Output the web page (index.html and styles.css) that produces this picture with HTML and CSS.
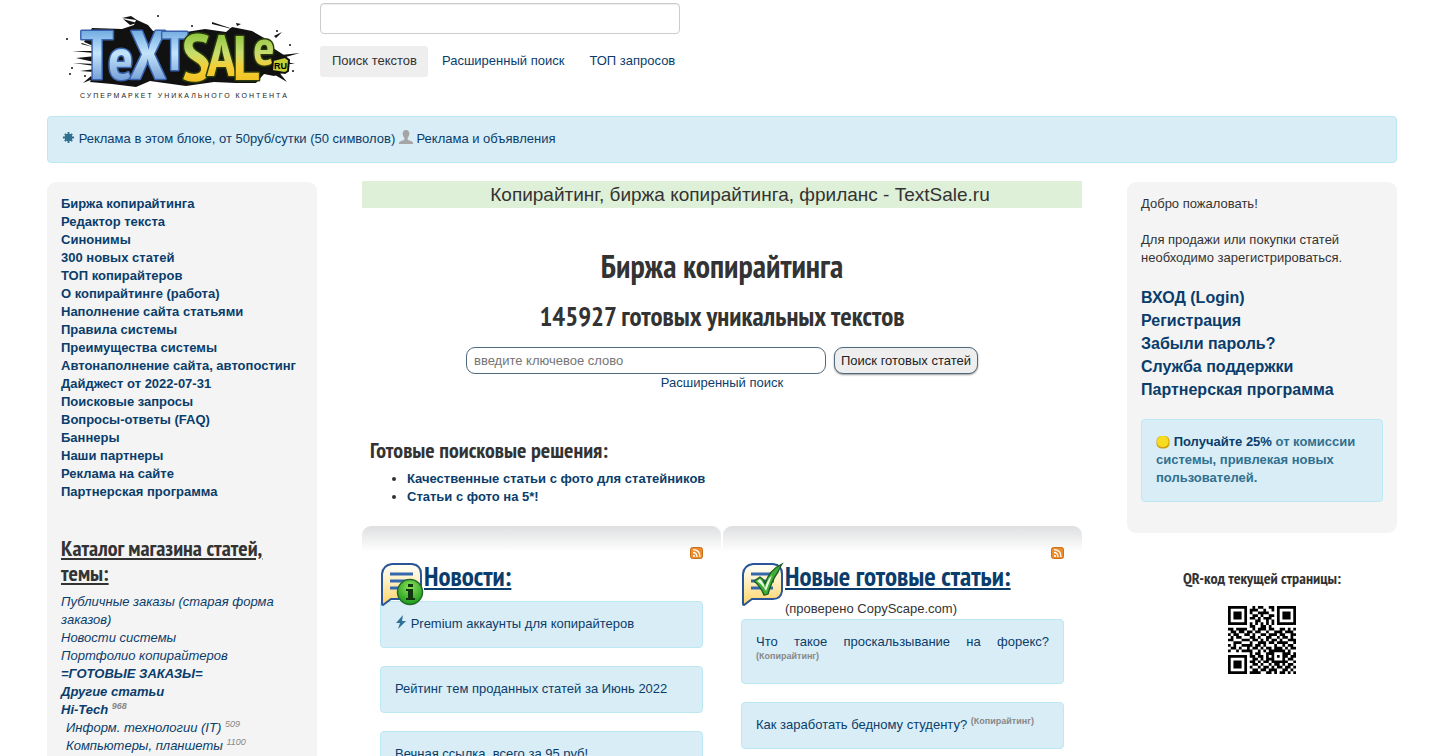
FILE: index.html
```html
<!DOCTYPE html>
<html lang="ru">
<head>
  <meta charset="UTF-8">
  <meta name="viewport" content="width=device-width, initial-scale=1.0">
  <title>Копирайтинг, биржа копирайтинга, фриланс - TextSale.ru</title>
  <link rel="stylesheet" href="styles.css">
</head>
<body>

<div class="container">
  <header class="header">
    <a href="#" class="logo" aria-label="TextSale.ru">
      <svg width="245" height="96" viewBox="60 8 245 96">
        <defs>
          <linearGradient id="blue" gradientUnits="userSpaceOnUse" x1="0" y1="28" x2="0" y2="84">
            <stop offset="0" stop-color="#69a5e0"/>
            <stop offset="0.45" stop-color="#c3e4fa"/>
            <stop offset="1" stop-color="#6b97d2"/>
          </linearGradient>
          <linearGradient id="green" gradientUnits="userSpaceOnUse" x1="0" y1="28" x2="0" y2="84">
            <stop offset="0" stop-color="#7fc031"/>
            <stop offset="0.45" stop-color="#c8dd6e"/>
            <stop offset="0.7" stop-color="#f5cf35"/>
            <stop offset="1" stop-color="#f0c020"/>
          </linearGradient>
        </defs>
        <!-- ink splash -->
        <g fill="#111">
          <path d="M92 28L122 29L134 25L136 20L122 18L131 16L137 20L148 25L153 31L186 32L205 29L226 32L232 27L252 31L266 39L273 48L287 57L288 71L274 76L264 74L256 83L236 83L214 82L186 86L150 81L136 87L112 84L90 82L94 72L80 71L95 69L94 62L76 58L96 56L98 48L84 42Z"/>
          <path d="M72 51h22v2zM73 63l22 1v2zM82 43l11 4-12-3zM281 55l19-2-18 5zM283 61l12 3-12 0zM212 22l24 8-24-6zM236 23l5 1-4 2zM274 36l8-4-6 6zM278 71l9 11-12-7zM130 25l-7-6 14 4zM91 76l-8 7 10-4z"/>
          <circle cx="67" cy="39" r="1"/><circle cx="72" cy="68" r="1"/><circle cx="70" cy="74" r="1"/><circle cx="85" cy="76" r="1"/>
          <circle cx="158" cy="16" r="1"/><circle cx="192" cy="26" r="1"/><circle cx="293" cy="71" r="1"/><circle cx="277" cy="31" r="1"/><circle cx="290" cy="45" r="1"/>
        </g>
        <g class="logo-letters">
          <text x="81" y="79" fill="url(#blue)" stroke="#3a63ad"><tspan font-size="68">T</tspan><tspan font-size="58" dx="-5">e</tspan><tspan font-size="68" dx="-3">X</tspan><tspan font-size="54" dx="-4" dy="-9">T</tspan></text>
          <text x="182" y="80" fill="url(#green)" stroke="#2a3a0c"><tspan font-size="66">S</tspan><tspan font-size="58" dx="-4" dy="-4">A</tspan><tspan font-size="62" dx="-3" dy="4">L</tspan><tspan font-size="50" dx="-6" dy="-15">e</tspan></text>
        </g>
        <path d="M273 60l12-3 4 3-1 11-3 2-13-2z" fill="#c6cf33" stroke="#111" stroke-width="2"/>
        <text x="274" y="69" class="logo-ru">RU</text>
        <text x="80" y="98" class="logo-tagline">СУПЕРМАРКЕТ УНИКАЛЬНОГО КОНТЕНТА</text>
      </svg>
    </a>
    <form class="top-search">
      <input type="text" class="top-input" aria-label="Поиск текстов">
      <nav class="pills">
        <a href="#" class="active">Поиск текстов</a>
        <a href="#">Расширенный поиск</a>
        <a href="#">ТОП запросов</a>
      </nav>
    </form>
  </header>

  <div class="alert">
    <svg class="icon" width="13" height="13" viewBox="0 0 14 14"><circle cx="7" cy="7" r="4" fill="#2f6f8f"/><path d="M7 1v12M1 7h12M3 3l8 8M11 3l-8 8" stroke="#2f6f8f" stroke-width="2"/></svg>
    <a href="#">Реклама в этом блоке, от 50руб/сутки (50 символов)</a>
    <svg class="icon" width="14" height="14" viewBox="0 0 14 14"><path d="M7 0C4.500 0 3.500 1.800 3.700 4c.1 1.800 1 3.200 1.700 4v1.500C4.500 10.500 1 11 0 12.500V14h14v-1.500c-1-1.500-4.500-2-5.400-3V8c.7-.8 1.600-2.200 1.700-4C10.500 1.800 9.500 0 7 0z" fill="#a6a5a5"/></svg>
    <a href="#">Реклама и объявления</a>
  </div>

  <div class="columns">
    <aside class="well">
      <ul class="menu">
        <li><a href="#">Биржа копирайтинга</a></li>
        <li><a href="#">Редактор текста</a></li>
        <li><a href="#">Синонимы</a></li>
        <li><a href="#">300 новых статей</a></li>
        <li><a href="#">ТОП копирайтеров</a></li>
        <li><a href="#">О копирайтинге (работа)</a></li>
        <li><a href="#">Наполнение сайта статьями</a></li>
        <li><a href="#">Правила системы</a></li>
        <li><a href="#">Преимущества системы</a></li>
        <li><a href="#">Автонаполнение сайта, автопостинг</a></li>
        <li><a href="#">Дайджест от 2022-07-31</a></li>
        <li><a href="#">Поисковые запросы</a></li>
        <li><a href="#">Вопросы-ответы (FAQ)</a></li>
        <li><a href="#">Баннеры</a></li>
        <li><a href="#">Наши партнеры</a></li>
        <li><a href="#">Реклама на сайте</a></li>
        <li><a href="#">Партнерская программа</a></li>
      </ul>
      <h3 class="catalog-title">Каталог магазина статей, темы:</h3>
      <ul class="catalog">
        <li><a href="#">Публичные заказы (старая форма заказов)</a></li>
        <li><a href="#">Новости системы</a></li>
        <li><a href="#">Портфолио копирайтеров</a></li>
        <li class="bold"><a href="#">=ГОТОВЫЕ ЗАКАЗЫ=</a></li>
        <li class="bold"><a href="#">Другие статьи</a></li>
        <li class="bold"><a href="#">Hi-Tech</a> <sup>968</sup></li>
        <li class="sub"><a href="#">Информ. технологии (IT)</a> <sup>509</sup></li>
        <li class="sub"><a href="#">Компьютеры, планшеты</a> <sup>1100</sup></li>
      </ul>
    </aside>

    <main>
      <p class="slogan">Копирайтинг, биржа копирайтинга, фриланс - TextSale.ru</p>
      <h1>Биржа копирайтинга</h1>
      <h2 class="counter">145927 готовых уникальных текстов</h2>
      <form class="search">
        <input type="text" placeholder="введите ключевое слово" aria-label="Ключевое слово">
        <button type="submit">Поиск готовых статей</button>
      </form>
      <p class="advanced"><a href="#">Расширенный поиск</a></p>

      <section class="solutions">
        <h3>Готовые поисковые решения:</h3>
        <ul>
          <li><a href="#">Качественные статьи с фото для статейников</a></li>
          <li><a href="#">Статьи с фото на 5*!</a></li>
        </ul>
      </section>

      <div class="panels">
        <section class="panel">
          <a href="#" class="rss" aria-label="RSS новостей">
            <svg width="13" height="12" viewBox="0 0 13 12"><rect x=".5" y=".5" width="12" height="11" rx="2" fill="#ee8b2c" stroke="#c9711d"/><circle cx="4" cy="9" r="1.100" fill="#fff"/><path d="M3 5.500c2.500 0 4 1.500 4 4.500M3 2.700c4.300 0 7 2.800 7 7.300" fill="none" stroke="#fff" stroke-width="1.300"/></svg>
          </a>
          <div class="panel-head">
            <svg width="44" height="46" viewBox="0 0 44 46">
              <defs><linearGradient id="paper" x1="0" y1="0" x2="0" y2="1"><stop offset="0.1" stop-color="#fffdf0"/><stop offset="1" stop-color="#ffd468"/></linearGradient><radialGradient id="ball" cx=".5" cy=".3" r=".7"><stop offset="0" stop-color="#8be05a"/><stop offset="1" stop-color="#1c9a1c"/></radialGradient></defs>
              <path d="M12 2h20q9 1 9 10v17q-1 8-9 8H11l-8 6q-1 0-1-1V12q1-9 10-10z" fill="url(#paper)" stroke="#2a5699" stroke-width="2"/>
              <path d="M10 12h23M10 19h23M10 26h12" stroke="#3467ab" stroke-width="3"/>
              <circle cx="30" cy="30" r="12.500" fill="url(#ball)" stroke="#236b27" stroke-width="1.500"/>
              <path d="M28 22h5v3h-5zM26 27h7v9h2v2h-9v-2h2v-7h-2z" fill="#10350f"/>
            </svg>
            <div>
              <h2><a href="#">Новости:</a></h2>
            </div>
          </div>
          <div class="alert">
            <svg class="icon" width="12" height="14" viewBox="0 0 12 14"><path d="M8 0L1 8h4l-2 6 8-8H7z" fill="#2f6f98"/></svg>
            <a href="#">Premium аккаунты для копирайтеров</a>
          </div>
          <div class="alert"><a href="#">Рейтинг тем проданных статей за Июнь 2022</a></div>
          <div class="alert"><a href="#">Вечная ссылка, всего за 95 руб!</a></div>
        </section>

        <section class="panel">
          <a href="#" class="rss" aria-label="RSS статей">
            <svg width="13" height="12" viewBox="0 0 13 12"><rect x=".5" y=".5" width="12" height="11" rx="2" fill="#ee8b2c" stroke="#c9711d"/><circle cx="4" cy="9" r="1.100" fill="#fff"/><path d="M3 5.500c2.500 0 4 1.500 4 4.500M3 2.700c4.300 0 7 2.800 7 7.300" fill="none" stroke="#fff" stroke-width="1.300"/></svg>
          </a>
          <div class="panel-head">
            <svg width="44" height="46" viewBox="0 0 44 46">
              <path d="M12 2h20q9 1 9 10v17q-1 8-9 8H11l-8 6q-1 0-1-1V12q1-9 10-10z" fill="url(#paper)" stroke="#2a5699" stroke-width="2"/>
              <path d="M10 12h20M10 19h23M10 26h22" stroke="#3467ab" stroke-width="3"/>
              <path d="M13 19l6-4q4 2 5 7Q28 8 41 2q-2 3-4 8-6 8-10 22-2 1-4 1-3-8-10-14z" fill="#3fae35" stroke="#1d5b24" stroke-width="1.300"/>
              <path d="M16 19l3-2q3 2 5 9 2-8 7-13-2 6-6 16-3-6-9-10z" fill="#e8f8df"/>
            </svg>
            <div>
              <h2><a href="#">Новые готовые статьи:</a></h2>
              <p>(проверено CopyScape.com)</p>
            </div>
          </div>
          <div class="alert justified"><a href="#">Что такое проскальзывание на форекс?</a> <sup>(Копирайтинг)</sup></div>
          <div class="alert"><a href="#">Как заработать бедному студенту?</a> <sup>(Копирайтинг)</sup></div>
        </section>
      </div>
    </main>

    <aside>
      <div class="well">
        <p>Добро пожаловать!</p>
        <p>Для продажи или покупки статей необходимо зарегистрироваться.</p>
        <ul class="account">
          <li><a href="#">ВХОД (Login)</a></li>
          <li><a href="#">Регистрация</a></li>
          <li><a href="#">Забыли пароль?</a></li>
          <li><a href="#">Служба поддержки</a></li>
          <li><a href="#">Партнерская программа</a></li>
        </ul>
        <div class="alert bold">
          <svg class="icon coin" width="14" height="14" viewBox="0 0 14 14"><rect x=".5" y="1" width="13" height="12.500" rx="5" fill="#d19e0d"/><rect x="1" y="1" width="11.500" height="11" rx="5" fill="#f8dc20"/></svg>
          <a href="#">Получайте 25%</a> от комиссии системы, привлекая новых пользователей.
        </div>
      </div>
      <div class="qr">
        <h4>QR-код текущей страницы:</h4>
        <svg id="qr" width="68" height="68" viewBox="0 0 25 25"><path/></svg>
      </div>
    </aside>
  </div>
</div>

<script src="script.js"></script>
</body>
</html>
```
FILE: styles.css
```css
html, body {
  height: 100%;
}

body {
  font-family: Arial, "Liberation Sans", sans-serif;
  font-size: 13px;
  line-height: 18px;
  color: #333;
  margin: 0;
  background: #fff;
  overflow: hidden;
}

h1, h2, h3, h4 {
  font-family: "PT Sans Narrow", "Liberation Sans Narrow", "Liberation Sans", sans-serif;
  font-weight: bold;
  margin: 0;
}

a {
  color: #0a3d6b;
  text-decoration: none;
}

p {
  margin: 0;
}

ul {
  list-style: none;
  margin: 0;
  padding: 0;
}

input, button {
  font-family: inherit;
  font-size: 13px;
  box-sizing: border-box;
}

sup {
  font-size: 9px;
  line-height: 0;
  color: #888;
}

.bold {
  font-weight: bold;
}

.container {
  padding: 0 46px 0 47px;
}

/* header */
.header {
  display: flex;
  height: 116px;
}

.logo {
  width: 260px;
  padding: 8px 0 0 13px;
}

.logo svg {
  overflow: visible;
}

.logo-letters text {
  font-family: "PT Sans Narrow", "Liberation Sans Narrow", "Liberation Sans", sans-serif;
  font-weight: bold;
  stroke-width: 3px;
  stroke-linejoin: round;
  paint-order: stroke;
}

.logo-ru {
  font-family: "Liberation Sans", sans-serif;
  font-size: 9px;
  font-weight: bold;
}

.logo-tagline {
  font-family: "Liberation Sans", sans-serif;
  font-size: 7px;
  letter-spacing: 2px;
  fill: #222;
}

.top-search {
  width: 360px;
  padding-top: 3px;
}

.top-input {
  display: block;
  width: 100%;
  height: 31px;
  border: 1px solid #ccc;
  border-radius: 4px;
  box-shadow: inset 0 1px 1px rgba(0,0,0,0.075);
}

.pills {
  display: flex;
  gap: 2px;
  margin-top: 12px;
  white-space: nowrap;
}

.pills a {
  padding: 6px 11px 7px 12px;
  border-radius: 3px;
}

.pills .active {
  background: #eee;
  color: #333;
}

/* blocks */
.alert {
  padding: 13px 14px 14px;
  margin-bottom: 18px;
  background: #d9edf7;
  border: 1px solid #bce8f1;
  border-radius: 4px;
  color: #31708f;
}

.icon {
  vertical-align: -1px;
}

.coin {
  vertical-align: -3px;
}

.columns {
  display: grid;
  grid-template-columns: 3fr 8fr 3fr;
  gap: 45px;
}

.columns > * {
  min-width: 0;
}

.well {
  margin-top: 1px;
  padding: 13px 14px;
  background: #f4f4f4;
  border-radius: 9px;
}

.menu {
  font-weight: bold;
}

.catalog-title {
  margin: 35px 0 7px;
  font-size: 22px;
  line-height: 25px;
  text-decoration: underline;
}

.catalog {
  font-style: italic;
}

.sub {
  padding-left: 5px;
}

/* center */
.slogan {
  padding-left: 36px;
  background: #dff0d8;
  font-size: 19px;
  line-height: 27px;
  text-align: center;
}

h1 {
  margin-top: 38px;
  font-size: 32px;
  line-height: 40px;
  text-align: center;
}

.counter {
  margin: 13px 0 14px;
  font-size: 27px;
  line-height: 34px;
  text-align: center;
}

.search {
  display: flex;
  justify-content: center;
  gap: 8px;
}

.search input {
  width: 50%;
  height: 27px;
  padding: 0 7px;
  border: 1px solid #50697c;
  border-radius: 9px;
}

.search button {
  height: 27px;
  padding: 0 6px;
  border: 1px solid #50697c;
  border-radius: 9px;
  background: #eee;
  color: #222;
  box-shadow: 0 1px 2px rgba(0,0,0,0.4);
}

.advanced {
  text-align: center;
}

.solutions {
  margin: 45px 8px 20px;
}

.solutions h3 {
  font-size: 22px;
  line-height: 26px;
  margin-bottom: 7px;
}

.solutions ul {
  list-style: disc;
  padding-left: 37px;
  font-weight: bold;
}

.panels {
  display: grid;
  grid-template-columns: 1fr 1fr;
  gap: 2px;
}

.panel {
  padding: 21px 18px 0;
  background: linear-gradient(#dedfe1, #fff 26px);
  border-radius: 9px 9px 0 0;
}

.rss {
  display: flex;
  justify-content: flex-end;
}

.panel-head {
  display: flex;
  margin-top: 3px;
}

/* the bubble hangs over the first block of the list */
.panel-head svg {
  flex: none;
  position: relative;
  margin-bottom: -12px;
}

.panel-head h2 {
  font-size: 27px;
  line-height: 29px;
  margin-bottom: 10px;
}

.panel-head h2 a {
  text-decoration: underline;
}

.panel-head p {
  margin: -1px 0 1px;
}

.justified {
  text-align: justify;
}

.panel sup {
  font-weight: bold;
}

/* right */
.well p {
  margin-bottom: 18px;
}

.account {
  margin: 19px 0 18px;
  font-size: 16px;
  line-height: 23px;
  font-weight: bold;
}

.qr {
  margin-top: 34px;
  text-align: center;
}

.qr h4 {
  font-size: 16px;
  line-height: 22px;
  margin-bottom: 17px;
}
```
FILE: script.js
```js
const rows = [
  '1111111001011001101111111',
  '1000001011100100101000001',
  '1011101010011110001011101',
  '1011101001101001101011101',
  '1011101011010111001011101',
  '1000001000110010101000001',
  '1111111010101010101111111',
  '0000000011001101000000000',
  '1101111001011101100110101',
  '0110110110110010011101110',
  '1011001101001101110110011',
  '0101100011010011001011010',
  '1100011101101010110100111',
  '0011100010011101101111001',
  '1010011110110100010010110',
  '0110100101101011011101011',
  '1001011110010101111110100',
  '0000000010110011100011101',
  '1111111011011010101011011',
  '1000001001101011100010110',
  '1011101011010110111111001',
  '1011101001101001011010110',
  '1011101010010110101101101',
  '1000001001101101110011010',
  '1111111011110011010110101'
];

let d = '';
rows.forEach((row, y) => {
  [...row].forEach((cell, x) => {
    if (cell === '1') d += `M${x} ${y}h1v1h-1z`;
  });
});
document.querySelector('#qr path').setAttribute('d', d);
```
